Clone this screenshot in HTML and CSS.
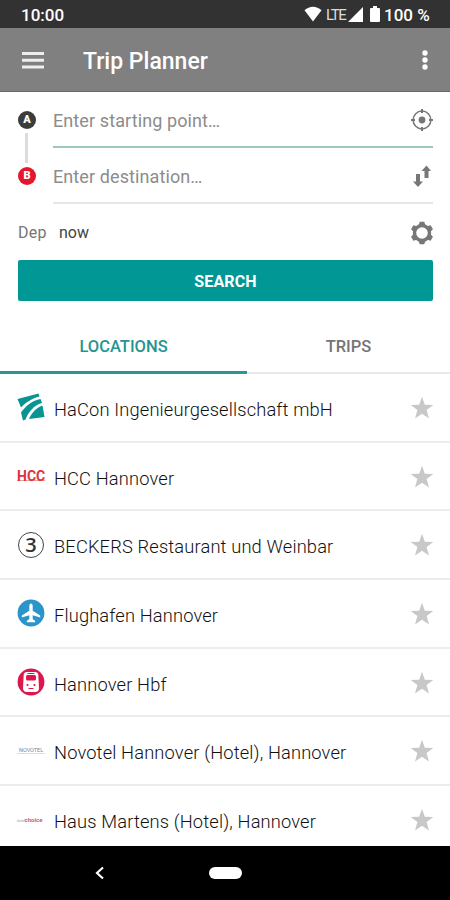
FILE: index.html
```html
<!DOCTYPE html>
<html lang="en">
<head>
    <meta charset="UTF-8">
    <meta name="viewport" content="width=device-width, initial-scale=1.0">
    <title>Trip Planner</title>
    <link rel="stylesheet" href="styles.css">
</head>
<body>
    <!-- shared icon shapes -->
    <svg class="defs" width="0" height="0">
        <symbol id="star" viewBox="0 0 24 24">
            <path d="M12 0.8L14.8 8.8L23.3 8.9L16.6 14L19 22.4L12 17.7L5 22.4L7.4 14L0.7 8.9L9.2 8.8Z"/>
        </symbol>
    </svg>

    <div class="statusbar">
        <span class="time">10:00</span>
        <div class="status-icons">
            <svg class="wifi" width="18" height="16" viewBox="0 0 18 16"><path d="M0.5 4.2C5.5-0.5 12.5-0.5 17.5 4.2L9 15.5Z"/></svg>
            <span class="lte">LTE</span>
            <svg class="signal" width="15" height="15" viewBox="0 0 15 15"><path d="M15 0V15H0Z"/></svg>
            <svg class="battery" width="10" height="16" viewBox="0 0 10 16"><path d="M3 0h4v2h2q1 0 1 1v12q0 1-1 1H1q-1 0-1-1V3q0-1 1-1h2z"/></svg>
            <span class="percent">100 %</span>
        </div>
    </div>

    <header class="toolbar">
        <svg class="menu" width="22" height="17" viewBox="0 0 22 17"><path d="M0 0h22v3H0zM0 6.7h22v3H0zM0 13.4h22v3H0z"/></svg>
        <h1>Trip Planner</h1>
        <svg class="more" width="6" height="20" viewBox="0 0 6 20"><circle cx="3" cy="3" r="2.7"/><circle cx="3" cy="10" r="2.7"/><circle cx="3" cy="17" r="2.7"/></svg>
    </header>

    <main>
        <section class="form">
            <div class="field">
                <span class="point point-a">A</span>
                <div class="input active">
                    <span class="hint">Enter starting point…</span>
                    <svg width="24" height="24" viewBox="0 0 24 24">
                        <circle cx="12" cy="12" r="8.9" fill="none" stroke="#777" stroke-width="1.5"/>
                        <circle cx="12" cy="12" r="3.4"/>
                        <path d="M11 1h2v4h-2zM11 19h2v4h-2zM1 11h4v2H1zM19 11h4v2h-4z"/>
                    </svg>
                </div>
                <span class="connector"></span>
            </div>
            <div class="field">
                <span class="point point-b">B</span>
                <div class="input">
                    <span class="hint">Enter destination…</span>
                    <svg width="24" height="24" viewBox="0 0 24 24">
                        <path d="M6 10h4v7.5h3L8 23l-5-5.5h3zM14.5 14V7h-3l5-5.5l4.500 5.500h-2.500v7z"/>
                    </svg>
                </div>
            </div>
            <div class="when">
                <span class="dep">Dep</span>
                <span class="now">now</span>
                <svg class="gear" width="24" height="24" viewBox="0 0 24 24">
                    <path d="M8.500 5L9.700 0.700h4.600L15.500 5zM8.500 19L9.700 23.300h4.600L15.500 19z"/>
                    <path d="M8.500 5L9.700 0.700h4.600L15.500 5zM8.500 19L9.700 23.300h4.600L15.500 19z" transform="rotate(60 12 12)"/>
                    <path d="M8.500 5L9.700 0.700h4.600L15.500 5zM8.500 19L9.700 23.300h4.600L15.500 19z" transform="rotate(120 12 12)"/>
                    <circle cx="12" cy="12" r="7.500" fill="none" stroke="#777" stroke-width="3.400"/>
                </svg>
            </div>
            <button class="search">SEARCH</button>
        </section>

        <nav class="tabs">
            <div class="tab selected">LOCATIONS</div>
            <div class="tab">TRIPS</div>
        </nav>

        <ul class="list">
            <li>
                <svg class="logo" width="28" height="28" viewBox="0 0 28 28" fill="#089491">
                    <path d="M0.500 6L21.500 0.500L22.500 3.500C15 5.500 8.500 9.500 4 14.500Z"/>
                    <path d="M23.500 6L25 10C16.500 12.500 11.500 19 8.500 26.500L6 27.500L4 19.500C9 12.500 15.500 7.500 23.500 6Z"/>
                    <path d="M25.500 12.500L27.500 24L12 26C14.500 20 19 15 25.500 12.500Z"/>
                </svg>
                <span class="name">HaCon Ingenieurgesellschaft mbH</span>
                <svg class="star"><use href="#star"/></svg>
            </li>
            <li>
                <span class="logo hcc">HCC</span>
                <span class="name">HCC Hannover</span>
                <svg class="star"><use href="#star"/></svg>
            </li>
            <li>
                <span class="logo beckers">3</span>
                <span class="name">BECKERS Restaurant und Weinbar</span>
                <svg class="star"><use href="#star"/></svg>
            </li>
            <li>
                <svg class="logo" width="28" height="28" viewBox="0 0 28 28">
                    <circle cx="14" cy="14" r="13.400" fill="#2b94ca"/>
                    <path fill="#fff" d="M14 4.500q1.700 0 1.700 3v4.200l7.500 4.800v1.900l-7.500-2.100v3.700l2.500 2v1.200H9.800V22l2.500-2v-3.700l-7.500 2.100v-1.900l7.500-4.800V7.500q0-3 1.700-3z"/>
                </svg>
                <span class="name">Flughafen Hannover</span>
                <svg class="star"><use href="#star"/></svg>
            </li>
            <li>
                <svg class="logo" width="28" height="28" viewBox="0 0 28 28">
                    <circle cx="14" cy="14" r="13.400" fill="#dd174d"/>
                    <path fill="#fff" d="M10 4h8q3 0 3.300 3l.7 13q0 3.500-3 4H9q-3-.5-3-4L6.700 7q.3-3 3.300-3z"/>
                    <rect x="9" y="7" width="10" height="5.500" rx="1.500" fill="#dd174d"/>
                    <path d="M10.500 5.500h7M11.500 20.500h5" stroke="#dd174d"/>
                    <circle cx="10.500" cy="17" r="1.100" fill="#dd174d"/>
                    <circle cx="17.500" cy="17" r="1.100" fill="#dd174d"/>
                </svg>
                <span class="name">Hannover Hbf</span>
                <svg class="star"><use href="#star"/></svg>
            </li>
            <li>
                <span class="logo novotel">NOVOTEL</span>
                <span class="name">Novotel Hannover (Hotel), Hannover</span>
                <svg class="star"><use href="#star"/></svg>
            </li>
            <li>
                <span class="logo choice"><i>hotel</i>choice</span>
                <span class="name">Haus Martens (Hotel), Hannover</span>
                <svg class="star"><use href="#star"/></svg>
            </li>
        </ul>
    </main>

    <footer class="navbar">
        <svg class="back" width="10" height="14" viewBox="0 0 10 14"><path d="M8 1.500L2 7l6 5.500" fill="none" stroke="#fff" stroke-width="2.200"/></svg>
        <span class="home"></span>
    </footer>
</body>
</html>
```

FILE: styles.css
```css
* {
    box-sizing: border-box;
}

body {
    margin: 0;
    width: 450px;
    height: 900px;
    overflow: hidden;
    display: flex;
    flex-direction: column;
    background: #fff;
    font-family: Roboto, "Liberation Sans", sans-serif;
}

svg {
    display: block;
    flex: none;
}

.defs {
    position: absolute;
}

/* status bar */
.statusbar {
    flex: none;
    height: 28px;
    padding: 2px 20px 0 21px;
    display: flex;
    align-items: center;
    justify-content: space-between;
    background: #323232;
    color: #fff;
    fill: #fff;
    white-space: nowrap;
}

.time {
    font-size: 17px;
    font-weight: 500;
}

.wifi,
.signal,
.battery {
    margin-top: -2px;
}

.status-icons {
    display: flex;
    align-items: center;
}

.lte {
    width: 20px;
    margin: 0 2px 0 4px;
    font-size: 15px;
    letter-spacing: -1.4px;
    color: #ddd;
}

.battery {
    margin-left: 7px;
    margin-right: 4px;
}

.percent {
    width: 46px;
    font-size: 17px;
    font-weight: 500;
}

/* toolbar */
.toolbar {
    flex: none;
    height: 64px;
    padding: 0 22px 0 22px;
    display: flex;
    align-items: center;
    background: #808080;
    border-bottom: 1px solid #6b6768;
    fill: #fff;
}

.menu {
    margin-top: 1px;
    fill: #eee;
}

h1 {
    flex: 1;
    margin: 3px 0 0 39px;
    font-size: 23px;
    font-weight: 500;
    color: #fff;
}

main {
    flex: 1;
    min-height: 0;
    overflow: hidden;
}

/* search form */
.form {
    padding: 0 17px 0 18px;
    fill: #777;
}

.form svg {
    margin: 1px -1px 0 0;
}

.field {
    position: relative;
    height: 56px;
    display: flex;
    align-items: center;
}

.point {
    width: 18px;
    height: 18px;
    margin-right: 17px;
    border-radius: 50%;
    font-size: 11px;
    font-weight: 900;
    line-height: 18px;
    text-align: center;
    color: #fff;
}

.point-a {
    background: #3c3c3c;
}

.point-b {
    background: #e4182c;
}

/* line between the two points */
.connector {
    position: absolute;
    left: 7px;
    top: 41px;
    width: 3px;
    height: 30px;
    background: #dcdcdc;
}

.input {
    flex: 1;
    height: 56px;
    display: flex;
    align-items: center;
    justify-content: space-between;
    border-bottom: 2px solid #e7e7e7;
}

.input.active {
    border-bottom-color: #9cc8bf;
}

.hint {
    padding-top: 2px;
    font-size: 18px;
    letter-spacing: 0.1px;
    color: #8c8c8c;
}

.when {
    height: 56px;
    display: flex;
    align-items: center;
    font-size: 16px;
}

.dep,
.now {
    padding-top: 1px;
}

.dep {
    width: 41px;
    letter-spacing: 0.2px;
    color: #757575;
}

.now {
    flex: 1;
    color: #444;
}

.search {
    display: block;
    width: 100%;
    height: 41px;
    padding: 2px 0 0;
    border: 0;
    border-radius: 2px;
    background: #009795;
    font-family: inherit;
    font-size: 16px;
    font-weight: 700;
    letter-spacing: 0.15px;
    color: #fff;
}

/* tabs */
.tabs {
    display: flex;
    height: 73px;
    border-bottom: 2px solid #e9e9e9;
}

.tab {
    flex: 1;
    height: 73px;
    padding-top: 17px;
    display: flex;
    align-items: center;
    justify-content: center;
    font-size: 16.500px;
    font-weight: 500;
    color: #757575;
}

.tab.selected {
    flex: none;
    width: 247px;
    padding-top: 20px;
    color: #269492;
    border-bottom: 3px solid #2c9492;
}

/* locations */
.list {
    margin: 0;
    padding: 0;
    list-style: none;
}

.list li {
    height: 68.700px;
    padding: 0 16px 0 17px;
    display: flex;
    align-items: center;
    border-bottom: 2px solid #ececec;
}

.logo {
    flex: none;
    width: 28px;
    margin-right: 9px;
}

.hcc {
    font-size: 14px;
    font-weight: 700;
    line-height: 16px;
    color: #e0343a;
    background: linear-gradient(#efa0a0, #efa0a0) 0 12px / 100% 1px no-repeat;
}

.beckers {
    width: 26px;
    height: 26px;
    margin: 0 10px 0 1px;
    border: 1.500px solid #444;
    border-radius: 50%;
    font-family: "Open Sans", sans-serif;
    font-size: 20px;
    font-weight: 600;
    line-height: 23px;
    text-align: center;
    color: #333;
}

.novotel {
    padding-left: 2px;
    font-size: 5.500px;
    color: #7b7f9c;
    border-bottom: 1px solid #dcdce4;
}

.choice {
    font-size: 6px;
    font-weight: 700;
    color: #c4626c;
    white-space: nowrap;
}

.choice i {
    font-size: 3.500px;
    font-weight: 400;
    color: #999;
}

.name {
    flex: 1;
    padding-top: 4px;
    font-size: 18.300px;
    font-weight: 300;
    letter-spacing: 0.15px;
    white-space: nowrap;
    color: #111;
}

.star {
    width: 24px;
    height: 24px;
    margin-top: 1px;
    fill: #c8c8c8;
}

/* system navigation */
.navbar {
    flex: none;
    height: 54px;
    display: flex;
    align-items: center;
    background: #000;
}

.back {
    margin: 0 104px 0 95px;
}

.home {
    width: 33px;
    height: 12px;
    border-radius: 6px;
    background: #fff;
}
```
